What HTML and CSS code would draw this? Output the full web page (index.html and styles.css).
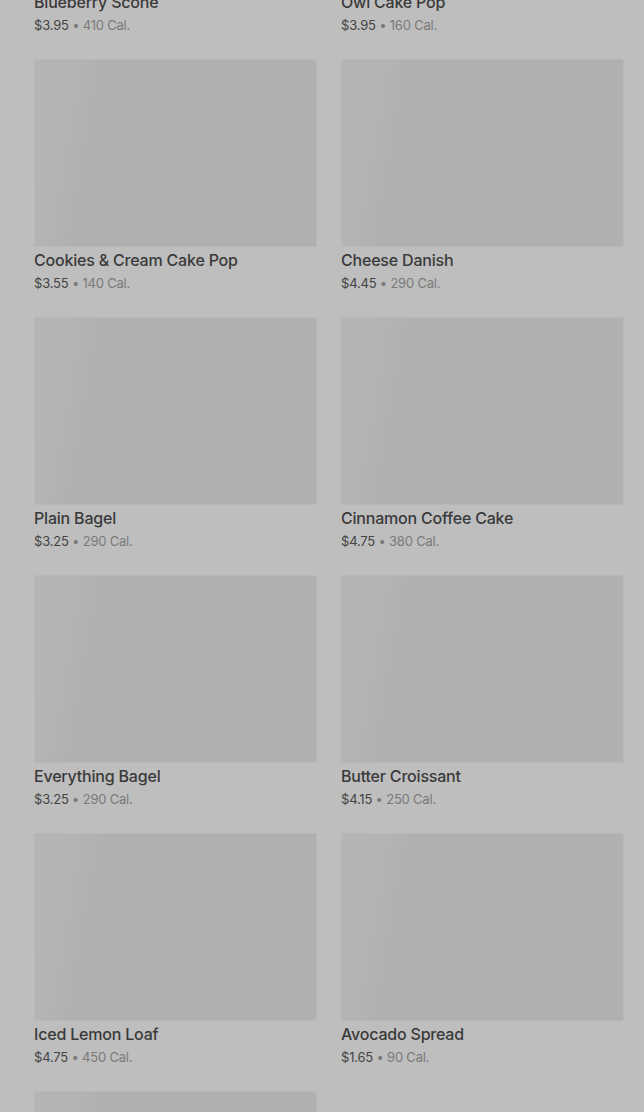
FILE: index.html
```html
<!DOCTYPE html>
<html lang="en">
<head>
<meta charset="utf-8">
<title>Menu</title>
<link rel="stylesheet" href="styles.css">
</head>
<body>
<main class="grid">
  <div class="card"><div class="img"></div><div class="name">Blueberry Scone</div><div class="meta"><span class="price">$3.95</span> • 410 Cal.</div></div>
  <div class="card"><div class="img"></div><div class="name">Owl Cake Pop</div><div class="meta"><span class="price">$3.95</span> • 160 Cal.</div></div>
  <div class="card"><div class="img"></div><div class="name">Cookies &amp; Cream Cake Pop</div><div class="meta"><span class="price">$3.55</span> • 140 Cal.</div></div>
  <div class="card"><div class="img"></div><div class="name">Cheese Danish</div><div class="meta"><span class="price">$4.45</span> • 290 Cal.</div></div>
  <div class="card"><div class="img"></div><div class="name">Plain Bagel</div><div class="meta"><span class="price">$3.25</span> • 290 Cal.</div></div>
  <div class="card"><div class="img"></div><div class="name">Cinnamon Coffee Cake</div><div class="meta"><span class="price">$4.75</span> • 380 Cal.</div></div>
  <div class="card"><div class="img"></div><div class="name">Everything Bagel</div><div class="meta"><span class="price">$3.25</span> • 290 Cal.</div></div>
  <div class="card"><div class="img"></div><div class="name">Butter Croissant</div><div class="meta"><span class="price">$4.15</span> • 250 Cal.</div></div>
  <div class="card"><div class="img"></div><div class="name">Iced Lemon Loaf</div><div class="meta"><span class="price">$4.75</span> • 450 Cal.</div></div>
  <div class="card"><div class="img"></div><div class="name">Avocado Spread</div><div class="meta"><span class="price">$1.65</span> • 90 Cal.</div></div>
  <div class="card"><div class="img"></div></div>
</main>
</body>
</html>
```
FILE: styles.css
```css
html, body {
  margin: 0;
  padding: 0;
  background: #bebebe;
  height: 100%;
  overflow: hidden;
}
body {
  font-family: Inter, "Liberation Sans", sans-serif;
}
.grid {
  display: grid;
  grid-template-columns: 283px 283px;
  column-gap: 24px;
  row-gap: 25px;
  padding: 0 20px 0 34px;
  margin-top: -199px;
}
.card {
  display: flex;
  flex-direction: column;
}
.img {
  box-sizing: border-box;
  height: 188px;
  border: 1px solid #b8b8b8;
  background: linear-gradient(100deg, #b5b5b5 0, #b4b4b4 40px, #b0b0b0 70px, #b0b0b0 100%);
}
.name {
  margin-top: 2px;
  font-size: 16px;
  font-weight: 500;
  line-height: 22px;
  letter-spacing: -0.2px;
  color: #3a3a3a;
  white-space: nowrap;
}
.meta {
  margin-top: 3px;
  font-size: 13px;
  line-height: 18px;
  letter-spacing: -0.2px;
  color: #7a7a7a;
  white-space: nowrap;
}
.price {
  color: #444444;
}
```
